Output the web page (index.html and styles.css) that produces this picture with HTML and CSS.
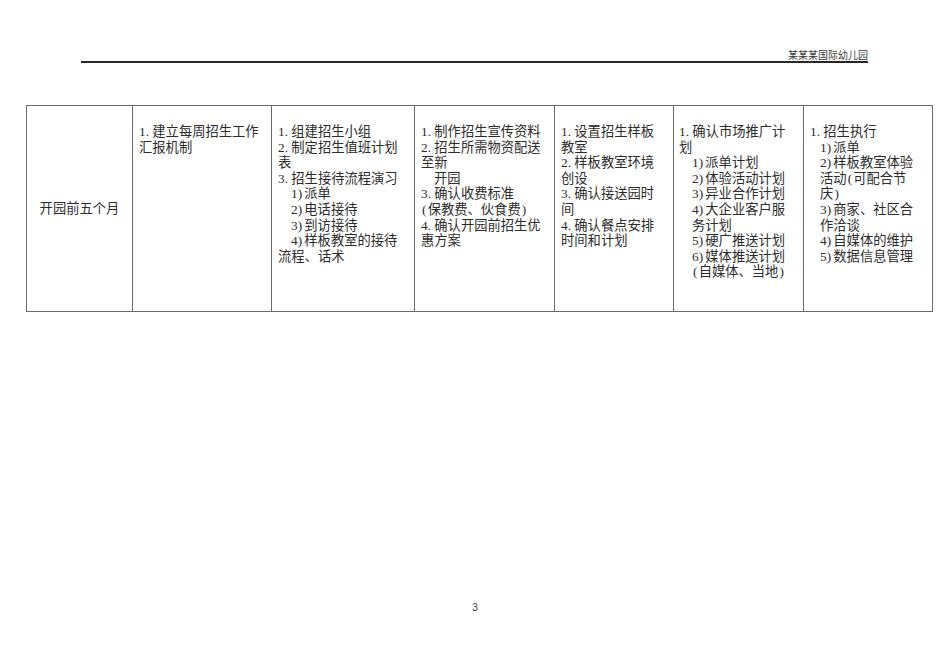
FILE: index.html
```html
<!DOCTYPE html>
<html lang="zh-CN">
<head>
<meta charset="utf-8">
<title>招生计划</title>
<link rel="stylesheet" href="styles.css">
</head>
<body>
<div class="page">
  <div class="header">某某某国际幼儿园</div>
  <table class="plan">
    <colgroup>
      <col class="c1"><col class="c2"><col class="c3"><col class="c4"><col class="c5"><col class="c6"><col class="c7">
    </colgroup>
    <tr>
      <td class="stage">开园前五个月</td>
      <td>
        <div class="ln"><span class="n">1.</span>建立每周招生工作</div>
        <div class="ln">汇报机制</div>
      </td>
      <td>
        <div class="ln"><span class="n">1.</span>组建招生小组</div>
        <div class="ln"><span class="n">2.</span>制定招生值班计划</div>
        <div class="ln">表</div>
        <div class="ln"><span class="n">3.</span>招生接待流程演习</div>
        <div class="ln in"><span class="n">1)</span>派单</div>
        <div class="ln in"><span class="n">2)</span>电话接待</div>
        <div class="ln in"><span class="n">3)</span>到访接待</div>
        <div class="ln in"><span class="n">4)</span>样板教室的接待</div>
        <div class="ln">流程、话术</div>
      </td>
      <td>
        <div class="ln"><span class="n">1.</span>制作招生宣传资料</div>
        <div class="ln"><span class="n">2.</span>招生所需物资配送</div>
        <div class="ln">至新</div>
        <div class="ln in">开园</div>
        <div class="ln"><span class="n">3.</span>确认收费标准</div>
        <div class="ln"><span class="p">(</span>保教费、伙食费<span class="p">)</span></div>
        <div class="ln"><span class="n">4.</span>确认开园前招生优</div>
        <div class="ln">惠方案</div>
      </td>
      <td>
        <div class="ln"><span class="n">1.</span>设置招生样板</div>
        <div class="ln">教室</div>
        <div class="ln"><span class="n">2.</span>样板教室环境</div>
        <div class="ln">创设</div>
        <div class="ln"><span class="n">3.</span>确认接送园时</div>
        <div class="ln">间</div>
        <div class="ln"><span class="n">4.</span>确认餐点安排</div>
        <div class="ln">时间和计划</div>
      </td>
      <td class="tight">
        <div class="ln"><span class="n">1.</span>确认市场推广计</div>
        <div class="ln">划</div>
        <div class="ln in"><span class="n">1)</span>派单计划</div>
        <div class="ln in"><span class="n">2)</span>体验活动计划</div>
        <div class="ln in"><span class="n">3)</span>异业合作计划</div>
        <div class="ln in"><span class="n">4)</span>大企业客户服</div>
        <div class="ln in">务计划</div>
        <div class="ln in"><span class="n">5)</span>硬广推送计划</div>
        <div class="ln in"><span class="n">6)</span>媒体推送计划</div>
        <div class="ln in"><span class="p">(</span>自媒体、当地<span class="p">)</span></div>
      </td>
      <td>
        <div class="ln"><span class="n">1.</span>招生执行</div>
        <div class="ln in2"><span class="n">1)</span>派单</div>
        <div class="ln in2"><span class="n">2)</span>样板教室体验</div>
        <div class="ln in2">活动<span class="p">(</span>可配合节</div>
        <div class="ln in2">庆<span class="p">)</span></div>
        <div class="ln in2"><span class="n">3)</span>商家、社区合</div>
        <div class="ln in2">作洽谈</div>
        <div class="ln in2"><span class="n">4)</span>自媒体的维护</div>
        <div class="ln in2"><span class="n">5)</span>数据信息管理</div>
      </td>
    </tr>
  </table>
  <div class="pageno">3</div>
</div>
</body>
</html>
```
FILE: styles.css
```css
html, body {
  margin: 0;
  padding: 0;
  background: #ffffff;
}

.page {
  width: 950px;
  padding-top: 48px;
  font-family: "Liberation Serif", "Noto Sans CJK SC", serif;
  color: #2c2c2c;
}

.header {
  margin: 0 0 0 81px;
  width: 787px;
  text-align: right;
  font-family: "Noto Sans CJK SC", sans-serif;
  font-size: 10px;
  line-height: 13px;
  color: #3a3a3a;
  border-bottom: 2px solid #262626;
}

.plan {
  margin: 42px 0 0 26px;
  width: 906px;
  border-collapse: collapse;
  table-layout: fixed;
}

.c1 { width: 106px; }
.c2 { width: 139px; }
.c3 { width: 143px; }
.c4 { width: 140px; }
.c5 { width: 119px; }
.c6 { width: 130px; }
.c7 { width: 129px; }

.plan td {
  border: 1px solid #6a6a6a;
  vertical-align: top;
  height: 187px;
  padding: 18px 2px 0 6px;
  font-size: 13.3px;
  line-height: 15.6px;
}

.plan td.tight {
  padding-left: 5px;
}

.plan td.stage {
  vertical-align: middle;
  text-align: center;
  padding: 0;
}

.ln {
  white-space: nowrap;
}

.ln.in {
  padding-left: 13px;
}

.ln.in2 {
  padding-left: 10px;
}

.n {
  display: inline-block;
  width: 1em;
}

.p {
  display: inline-block;
  width: 0.5em;
  text-align: center;
}

.pageno {
  margin-top: 290px;
  text-align: center;
  font-family: "Liberation Sans", sans-serif;
  font-size: 10px;
  line-height: 12px;
  color: #333333;
}
```
